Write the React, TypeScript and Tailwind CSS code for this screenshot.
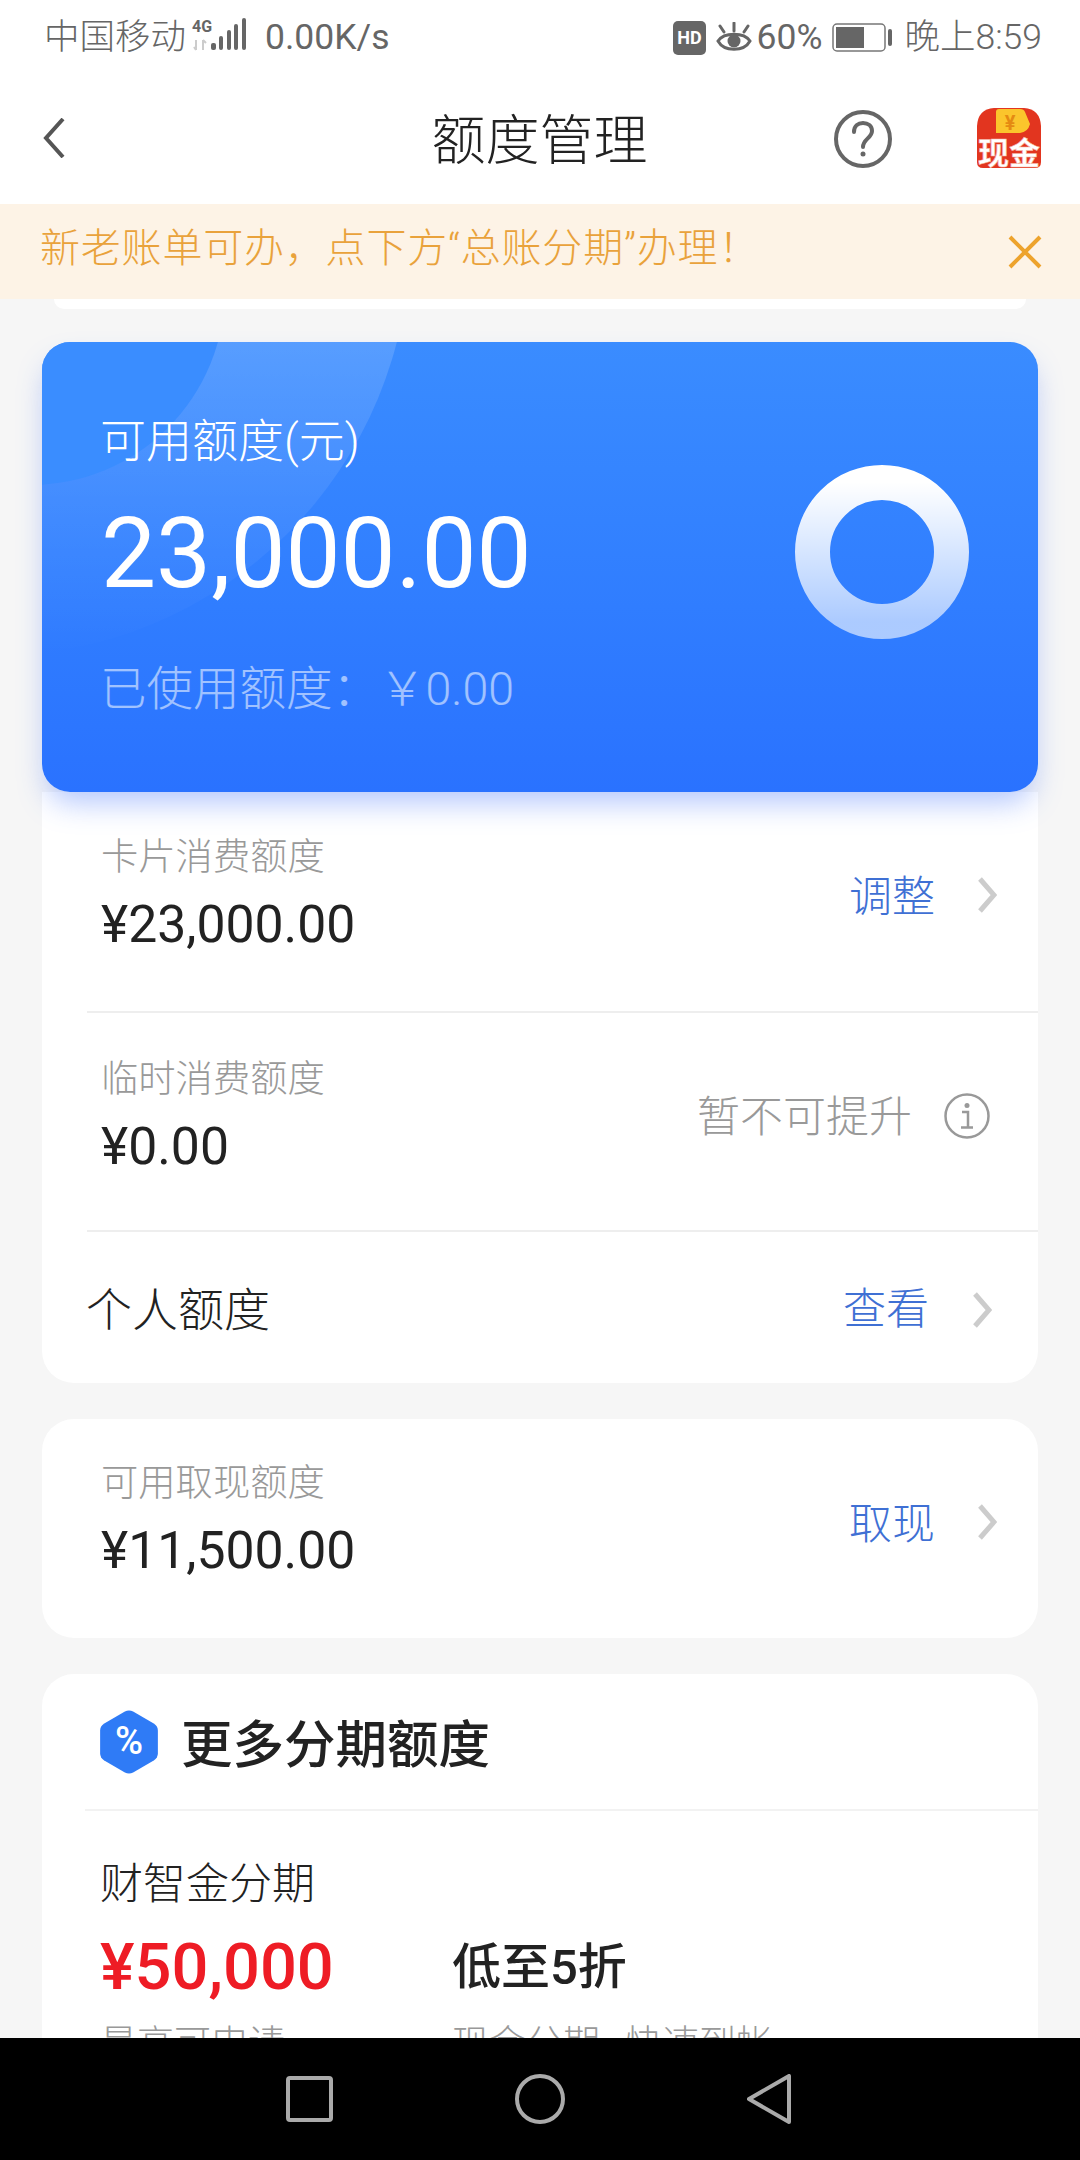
function StatusBar() {
  return (
    <div className="flex h-[76px] items-center bg-white pl-[44px] pr-[38px] text-[35.5px] text-[#666]">
      <span className="font-light">中国移动</span>
      <svg width="56" height="40" viewBox="0 0 56 40" className="ml-[6px]">
        <text x="0" y="14" fontSize="16" fontWeight="700" fill="#666" fontFamily="Roboto">4G</text>
        <path d="M4 22v10M2 29l2 3M11 22v10M11 22l3 3" stroke="#ccc" strokeWidth="2" fill="none" />
        <rect x="19" y="25" width="5" height="7" rx="2" fill="#666" />
        <rect x="27" y="18" width="4" height="14" rx="2" fill="#666" />
        <rect x="35" y="12" width="4" height="20" rx="2" fill="#666" />
        <rect x="42" y="6" width="4" height="26" rx="2" fill="#666" />
        <rect x="50" y="0" width="4" height="32" rx="2" fill="#666" />
      </svg>
      <span className="ml-[17px]">0.00K/s</span>
      <div className="ml-auto flex items-center">
        <svg width="33" height="34" viewBox="0 0 33 34">
          <rect width="33" height="34" rx="5" fill="#666" />
          <text x="16.5" y="23" textAnchor="middle" fontSize="18" fontWeight="700" fill="#fff" fontFamily="Roboto">HD</text>
        </svg>
        <svg width="36" height="32" viewBox="0 0 36 32" className="ml-[10px]">
          <path d="M2 19C8 10 28 10 34 19C28 30 8 30 2 19Z" fill="none" stroke="#666" strokeWidth="3" />
          <circle cx="18" cy="19" r="6.5" fill="#666" />
          <path d="M4 4l4 6M18 1v8M32 4l-4 6" stroke="#666" strokeWidth="3" fill="none" strokeLinecap="round" />
        </svg>
        <span className="ml-[5px]">60%</span>
        <svg width="60" height="30" viewBox="0 0 60 30" className="ml-[10px]">
          <rect x="1" y="1" width="52" height="27" rx="4" fill="none" stroke="#777" strokeWidth="1.5" />
          <rect x="4" y="4" width="28" height="21" fill="#666" />
          <rect x="56" y="6" width="4" height="17" rx="2" fill="#666" />
        </svg>
        <span className="ml-[12px] font-light">晚上8:59</span>
      </div>
    </div>
  )
}

function NavBar() {
  return (
    <div className="grid h-[128px] grid-cols-[1fr_auto_1fr] items-center bg-white pl-[43px] pr-[38px]">
      <svg width="22" height="40" viewBox="0 0 22 40" fill="none" stroke="#555" strokeWidth="4" className="mb-[4px]">
        <path d="M20 1L3 20L20 39" />
      </svg>
      <h1 className="mr-[6px] pt-[4px] text-[54px] font-light leading-none text-[#222]">额度管理</h1>
      <div className="flex items-center justify-end gap-[84px]">
        <svg width="58" height="58" viewBox="0 0 58 58" fill="none" stroke="#666" strokeWidth="4" className="mb-[2px]">
          <circle cx="29" cy="29" r="27" />
          <path d="M20 22c0-6 4-9 9-9s9 3 9 8c0 7-9 8-9 16" strokeLinecap="round" />
          <circle cx="29" cy="44" r="2.5" fill="#666" stroke="none" />
        </svg>
        <svg width="66" height="64" viewBox="0 0 66 64" className="mb-[4px]">
          <path d="M1 20Q2 3 18 2H48Q64 3 65 20V56Q65 62 59 62H7Q1 62 1 56Z" fill="#e2351f" />
          <path d="M20 6Q20 3 23 3H44Q48 3 49 6L54 18Q52 26 44 27H20Z" fill="#fbc52c" />
          <text x="34" y="24" textAnchor="middle" fontSize="20" fontWeight="700" fill="#e58a12">¥</text>
          <text x="33" y="58" textAnchor="middle" fontSize="31" fontWeight="700" fill="#fff" stroke="#f5b5a5" strokeWidth="0.6">现金</text>
        </svg>
      </div>
    </div>
  )
}

function Banner() {
  return (
    <div className="flex h-[95px] items-center justify-between bg-[#fdf3e6] pl-[40px] pr-[38px]">
      <span className="pb-[6px] text-[40px] font-light tracking-[0.8px] text-[#e9a23b]">新老账单可办，点下方“总账分期”办理！</span>
      <svg width="34" height="34" viewBox="0 0 34 34" fill="none" stroke="#eda32d" strokeWidth="4">
        <path d="M2 2L32 32M32 2L2 32" />
      </svg>
    </div>
  )
}

function Chevron() {
  return (
    <svg width="20" height="36" viewBox="0 0 20 36" fill="none" stroke="#ccc" strokeWidth="5">
      <path d="M3 2L17 18L3 34" />
    </svg>
  )
}

function AmountCell({ label, amount }: { label: string; amount: string }) {
  return (
    <div className="pl-[14px]">
      <p className="text-[37.3px] font-light leading-[44px] text-[#999]">{label}</p>
      <p className="mt-[18px] text-[51.7px] leading-[56px] text-[#222]">{amount}</p>
    </div>
  )
}

function ActionLink({ text }: { text: string }) {
  return (
    <div className="flex items-center gap-[42px] pr-[41px]">
      <span className="text-[43px] font-light leading-none text-[#3f70d4]">{text}</span>
      <div className="mb-[6px] flex">
        <Chevron />
      </div>
    </div>
  )
}

function BlueCard() {
  return (
    <div className="relative z-10 flex h-[450px] items-start justify-between overflow-hidden rounded-[28px] bg-gradient-to-b from-[#3a8cff] to-[#2a72ff] pl-[58px] pr-[69px] shadow-[0_16px_30px_-6px_rgba(60,110,250,0.4)]">
      <div className="absolute left-[-468px] top-[-522px] h-[836px] w-[836px] rounded-full bg-gradient-to-b from-white/40 to-white/0" />
      <div className="absolute left-[-207px] top-[-247px] h-[390px] w-[390px] rounded-full bg-[#3a8dff]" />
      <div className="relative">
        <p className="mt-[73px] text-[46px] font-light leading-[52px] text-white">可用额度(元)</p>
        <p className="ml-[1px] mt-[32px] text-[98px] leading-[110px] text-white">23,000.00</p>
        <p className="mt-[54px] text-[46.5px] font-light leading-[52px] text-white/55">已使用额度：￥0.00</p>
      </div>
      <svg width="174" height="174" viewBox="0 0 174 174" className="relative mt-[123px]">
        <defs>
          <linearGradient id="ring" x1="0" y1="0" x2="0" y2="1">
            <stop offset="0" stopColor="#fff" />
            <stop offset="1" stopColor="#fff" stopOpacity="0.6" />
          </linearGradient>
        </defs>
        <circle cx="87" cy="87" r="69.5" fill="none" stroke="url(#ring)" strokeWidth="35" />
      </svg>
    </div>
  )
}

export default function App() {
  return (
    <div className="flex h-[2160px] w-[1080px] flex-col overflow-hidden bg-[#f6f6f6] font-['Roboto','Noto_Sans_CJK_SC',sans-serif]">
      <StatusBar />
      <NavBar />
      <Banner />
      <main className="min-h-0 flex-1 overflow-hidden">
        <div className="mx-[54px] h-[10px] rounded-b-[12px] bg-white" />

        <div className="mx-[42px] mt-[33px]">
          <BlueCard />
          <div className="rounded-b-[32px] bg-white">
            <div className="ml-[45px] flex h-[221px] items-center justify-between border-b-2 border-[#eee] pb-[16px]">
              <AmountCell label="卡片消费额度" amount="¥23,000.00" />
              <div className="mt-[8px]">
                <ActionLink text="调整" />
              </div>
            </div>
            <div className="ml-[45px] flex h-[219px] items-center justify-between border-b-2 border-[#eee] pb-[12px]">
              <AmountCell label="临时消费额度" amount="¥0.00" />
              <div className="flex items-center gap-[32px] pr-[48px]">
                <span className="mt-[4px] text-[43px] font-light leading-none text-[#999]">暂不可提升</span>
                <svg width="46" height="46" viewBox="0 0 46 46" fill="none" stroke="#999" strokeWidth="2.5">
                  <circle cx="23" cy="23" r="21.5" />
                  <circle cx="23" cy="12.5" r="2.5" fill="#999" stroke="none" />
                  <path d="M18 19h6v15M17 34.5h12" />
                </svg>
              </div>
            </div>
            <div className="ml-[45px] flex h-[151px] items-center justify-between pt-[4px]">
              <span className="-ml-[1px] text-[46px] font-light leading-none text-[#222]">个人额度</span>
              <div className="flex items-center gap-[43px] pr-[46px]">
                <span className="text-[43px] font-light leading-none text-[#3f70d4]">查看</span>
                <Chevron />
              </div>
            </div>
          </div>
        </div>

        <div className="mx-[42px] mt-[36px] flex h-[219px] items-center justify-between rounded-[32px] bg-white pb-[18px] pl-[45px]">
          <AmountCell label="可用取现额度" amount="¥11,500.00" />
          <div className="mt-[10px]">
            <ActionLink text="取现" />
          </div>
        </div>

        <div className="mx-[42px] mt-[36px] rounded-t-[32px] bg-white">
          <div className="ml-[43px] flex h-[137px] items-center gap-[22px] border-b-2 border-[#f2f2f2] pl-[14px]">
            <svg width="60" height="66" viewBox="0 0 58 64">
              <path d="M25 2.5Q29 0.5 33 2.5L53 14Q57 16.5 57 21V43Q57 47.5 53 50L33 61.5Q29 63.5 25 61.5L5 50Q1 47.5 1 43V21Q1 16.5 5 14Z" fill="#2f7bf6" />
              <text x="29" y="44" textAnchor="middle" fontSize="37" fontWeight="500" fontFamily="Roboto" fill="#fff">%</text>
            </svg>
            <span className="pt-[8px] text-[51.5px] font-medium leading-none text-[#222]">更多分期额度</span>
          </div>
          <div className="pl-[58px] pt-[50px]">
            <p className="text-[43px] font-light leading-[46px] text-[#222]">财智金分期</p>
            <div className="mt-[22px] grid grid-cols-[352px_1fr] items-center">
              <p className="text-[65px] font-medium leading-[72px] text-[#ee1c25]">¥50,000</p>
              <p className="pt-[3px] text-[49px] font-medium leading-[72px] text-[#222]">低至5折</p>
            </div>
            <div className="mt-[19px] grid grid-cols-[352px_1fr]">
              <p className="text-[37px] font-light leading-[44px] text-[#999]">最高可申请</p>
              <p className="text-[37px] font-light leading-[44px] text-[#999] [word-spacing:16px]">现金分期 快速到帐</p>
            </div>
          </div>
        </div>
      </main>
      <nav className="flex h-[122px] shrink-0 items-center bg-black pl-[286px] text-[#aaa]">
        <svg width="47" height="46" viewBox="0 0 47 46" fill="none" stroke="currentColor" strokeWidth="4">
          <rect x="2" y="2" width="43" height="42" rx="2" />
        </svg>
        <svg width="50" height="50" viewBox="0 0 50 50" fill="none" stroke="currentColor" strokeWidth="4" className="ml-[182px]">
          <circle cx="25" cy="25" r="23" />
        </svg>
        <svg width="44" height="50" viewBox="0 0 44 50" fill="none" stroke="currentColor" strokeWidth="4" strokeLinejoin="round" className="ml-[182px]">
          <path d="M42 2V48L2 25Z" />
        </svg>
      </nav>
    </div>
  )
}
